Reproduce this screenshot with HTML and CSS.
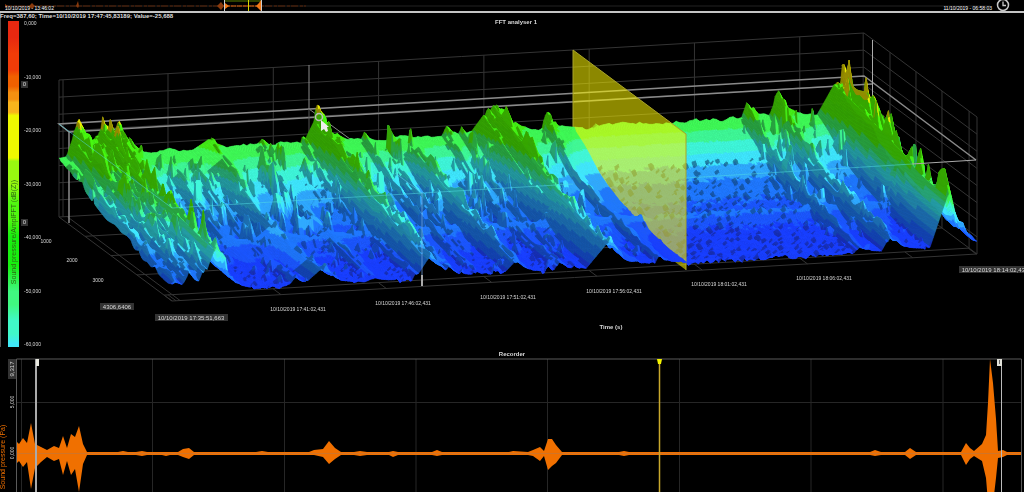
FILE: index.html
```
<!DOCTYPE html>
<html lang="en">
<head>
  <meta charset="UTF-8">
  <meta name="viewport" content="width=device-width, initial-scale=1.0">
  <title>FFT analyser</title>
  <link rel="stylesheet" href="styles.css">
</head>
<body>

  <!-- Overview bar -->
  <header class="overview">
    <svg class="overview-wave" viewBox="0 0 1024 11" preserveAspectRatio="none" aria-hidden="true">
      <line x1="5" y1="6" x2="990" y2="6" stroke="#222"/>
      <line x1="5" y1="6" x2="306" y2="6" stroke="#5a2408" stroke-dasharray="7 2 3 1"/>
      <path d="M5 4l3 2-3 2zM29 6l3-3 3 3-3 3zM76 6l2-5 1 5-1 2zM217 6l4-4 3 4-3 4z" fill="#8a3a0c"/>
      <rect x="225" y="0" width="36" height="2" fill="#2c4000"/>
      <line x1="225" y1="6" x2="261" y2="6" stroke="#d86410" stroke-dasharray="5 1"/>
      <path d="M225 3l4 3-4 3zM256 6l3-3 2-3v11l-2-2z" fill="#f07818"/>
      <rect x="248" y="0" width="1" height="11" fill="#d8d800"/>
      <path d="M224.500 0v11M261.500 0v11" stroke="#ccc"/>
    </svg>
    <div class="overview-labels">
      <time>10/10/2019 - 13:46:02</time>
      <time class="end">11/10/2019 - 06:58:03</time>
      <svg class="clock" viewBox="0 0 14 14" aria-hidden="true">
        <circle cx="7" cy="7" r="5.500" fill="#000" stroke="#c8c8c8" stroke-width="1.500"/>
        <path d="M7 3.500V7.500H10" fill="none" stroke="#c8c8c8" stroke-width="1.300"/>
      </svg>
    </div>
  </header>

  <!-- 3D FFT -->
  <section class="fft">
    <p class="readout">Freq=387,60; Time=10/10/2019 17:47:45,83189; Value=-25,688</p>
    <div class="fft-body">
      <canvas id="surface" width="1024" height="329"></canvas>

      <svg class="labels" viewBox="0 18 1024 329">
        <text x="516" y="24" class="title">FFT analyser 1</text>
        <text x="611" y="329" class="title">Time (s)</text>
        <g class="tick">
          <text x="46" y="243">1000</text>
          <text x="72" y="262">2000</text>
          <text x="98" y="282">3000</text>
          <text x="298" y="311">10/10/2019 17:41:02,431</text>
          <text x="403" y="305">10/10/2019 17:46:02,431</text>
          <text x="508" y="299">10/10/2019 17:51:02,431</text>
          <text x="614" y="293">10/10/2019 17:56:02,431</text>
          <text x="719" y="286">10/10/2019 18:01:02,431</text>
          <text x="824" y="280">10/10/2019 18:06:02,431</text>
        </g>
        <g class="edge">
          <rect x="100" y="303" width="34" height="7"/>
          <text x="117" y="309">4306,6406</text>
          <rect x="155" y="314" width="73" height="7"/>
          <text x="191" y="320">10/10/2019 17:35:51,663</text>
          <rect x="959" y="266" width="73" height="7"/>
          <text x="995" y="272">10/10/2019 18:14:02,431</text>
        </g>
        <!-- cursor -->
        <circle cx="319" cy="117" r="3.500" fill="none" stroke="#bbb" stroke-width="1.500"/>
        <path d="M321 120v11l3-2 2 3 2-1-1-4h2z" fill="#eee"/>
      </svg>

      <div class="scale">
        <div class="scale-bar"><span>Sound pressure/AmplFFT (dB(Z))</span></div>
        <ol class="scale-ticks">
          <li>0,000</li>
          <li>-10,000</li>
          <li>-20,000</li>
          <li>-30,000</li>
          <li>-40,000</li>
          <li>-50,000</li>
          <li>-60,000</li>
        </ol>
        <div class="scale-marks"><span>0</span><span>0</span></div>
      </div>
    </div>
  </section>

  <!-- Recorder -->
  <section class="recorder">
    <h2>Recorder</h2>
    <svg viewBox="0 358 1024 134">
      <path class="grid" d="M21.500 359V492M152.500 359V492M284.500 359V492M416 359V492M547.500 359V492M679.500 359V492M811 359V492M943 359V492M16 402.500H1022"/>
      <path class="frame" d="M16.500 492V359H1021.500V492"/>

      <path id="wave" class="wave"/>
      <path d="M17 453.500H1021" stroke="#d07428"/>

      <!-- selection handles and playback position -->
      <rect x="35" y="359" width="2" height="133" fill="#aaa"/>
      <rect x="36" y="359" width="3" height="7" fill="#e8e8e0"/>
      <path d="M659.500 359V492" stroke="#c8a82c" stroke-width="1.500"/>
      <path d="M657 359h5l-1 5h-3z" fill="#f4f400"/>
      <rect x="1001" y="364" width="1" height="128" fill="#bbb"/>
      <rect x="997" y="359" width="5" height="7" fill="#e0e0d8"/>
      <path d="M999.500 360v4" stroke="#666"/>

      <rect x="8" y="359" width="8" height="20" fill="#333"/>
      <text class="peak" transform="translate(14 369) rotate(-90)">9,317</text>
      <g class="tick">
        <text transform="translate(14 402) rotate(-90)">5,000</text>
        <text transform="translate(14 453) rotate(-90)">0,000</text>
      </g>
      <text class="axis" transform="translate(5 457) rotate(-90)">Sound pressure (Pa)</text>
    </svg>
  </section>

  <script src="surface.js"></script>
  <script src="recorder.js"></script>
</body>
</html>
```
FILE: styles.css
```
/* ========== base ========== */
:root {
  --text: #d8d8d8;
  --line: #c4c4c4;
  --orange: #f07000;
}

* {
  box-sizing: border-box;
}

body {
  margin: 0;
  background: #000;
  color: var(--text);
  font-family: "Liberation Sans", Arial, sans-serif;
  font-size: 6px;
  overflow: hidden;
}

svg,
canvas {
  display: block;
  width: 100%;
}

/* ========== overview ========== */
.overview {
  display: grid;
  grid-template-rows: 11px;
  height: 13px;
  border-bottom: 2px solid var(--line);
}
.overview-wave,
.overview-labels {
  grid-area: 1 / 1;
}
.overview-wave {
  height: 11px;
}
.overview-labels {
  display: flex;
  align-items: flex-end;
  padding: 0 14px 0 5px;
  font-size: 5px;
  line-height: 6px;
  color: #fff;
}
.overview-labels .end {
  margin-left: auto;
  margin-right: 4px;
}
.clock {
  width: 14px;
  height: 14px;
  align-self: flex-start;
  margin-top: -2px;
}

/* ========== fft ========== */
.fft {
  border-left: 1px solid #555;
}
.readout {
  margin: 0 0 -2px -1px;
  font-size: 6px;
  font-weight: bold;
  line-height: 7px;
  color: #ddd;
}
.fft-body {
  display: grid;
  margin-left: -1px;
}
.fft-body > * {
  grid-area: 1 / 1;
}
.labels {
  height: 100%;
}

text {
  fill: var(--text);
  text-anchor: middle;
}
.title {
  font-size: 6px;
  font-weight: bold;
}
.tick text {
  font-size: 5px;
}
.edge rect {
  fill: #333;
}
.edge text,
.peak {
  font-size: 6px;
}

/* colour scale */
.scale {
  display: flex;
  gap: 5px;
  padding: 3px 0 0 8px;
}
.scale-bar {
  display: flex;
  justify-content: center;
  width: 11px;
  padding-bottom: 63px;
  background: linear-gradient(
    #e82810 0 5%, #f03c08 10% 15%, #f06000 17% 20%, #f49010 22% 24%,
    #f8b41c 25% 28%, #eef800 29% 42%, #98f810 43% 50%, #50f810 56% 61%,
    #18f010 66% 75%, #40f880 83% 87%, #40f8c8 92% 96%, #40e8f8 99%
  );
}
.scale-bar span {
  writing-mode: vertical-rl;
  transform: rotate(180deg);
  line-height: 11px;
  font-size: 7px;
  color: #2c6a10;
  margin-top: auto;
}
.scale-ticks {
  display: flex;
  flex-direction: column;
  justify-content: space-between;
  margin: 0;
  padding: 0;
  list-style: none;
  font-size: 5px;
  line-height: 5px;
}
.scale-marks {
  display: flex;
  flex-direction: column;
  gap: 131px;
  margin-left: -25px;
  padding-top: 60px;
}
.scale-marks span {
  width: 7px;
  line-height: 7px;
  background: #333;
  text-align: center;
}

/* ========== recorder ========== */
.recorder h2 {
  margin: 4px 0 0;
  font-size: 6px;
  line-height: 7px;
  text-align: center;
}
.recorder .grid {
  fill: none;
  stroke: #262626;
}
.recorder .frame {
  fill: none;
  stroke: #5a5a5a;
}
.wave {
  fill: var(--orange);
}
.axis {
  font-size: 7px;
  fill: var(--orange);
}
```
FILE: surface.js
```
// Waterfall surface: t = time (left to right), f = frequency (back to front)
const canvas = document.getElementById('surface');
const ctx = canvas.getContext('2d');
ctx.translate(0, -18);

const NT = 480;
const NF = 130;
const PLANE_T = 0.6385;

function project(t, f, h) {
  return [59 + 805 * t + 113 * f, 217 - 47 * t + 84 * f - h];
}

function hash(a, b) {
  const s = Math.sin(a * 127.1 + b * 311.7) * 43758.5453;
  return s - Math.floor(s);
}

// smooth value noise
function noise(x, y) {
  const xi = Math.floor(x), yi = Math.floor(y);
  const u = x - xi, v = y - yi;
  const top = hash(xi, yi) * (1 - u) + hash(xi + 1, yi) * u;
  const bottom = hash(xi, yi + 1) * (1 - u) + hash(xi + 1, yi + 1) * u;
  return top * (1 - v) + bottom * v;
}

// heights at f = 0, 1/n, ... 1
function curve(values, f) {
  const p = f * (values.length - 1);
  const i = Math.min(values.length - 2, Math.floor(p));
  return values[i] + (values[i + 1] - values[i]) * (p - i);
}

const BASE = [57, 53, 48, 42, 35, 30, 26, 23, 20, 18, 16, 14, 20, 13, 11, 10, 9, 8, 8, 8, 8];

// [position, rise width, fall width, heights along f]
const RIDGES = [
  [0.004, 0.010, 0.024, [58, 64, 48, 34, 24]],
  [0.022, 0.014, 0.026, [92, 84, 66, 52, 30]],
  [0.042, 0.014, 0.020, [80, 80, 72, 54, 38]],
  [0.058, 0.024, 0.012, [98, 88, 80, 74, 66]],
  [0.075, 0.020, 0.012, [96, 76, 44, 10, 0]],
  [0.088, 0.012, 0.010, [80, 56, 30, 10, 0]],
  [0.130, 0.014, 0.012, [60, 46, 28, 14, 0]],
  [0.155, 0.010, 0.010, [60, 48, 26, 16, 20]],
  [0.190, 0.028, 0.012, [72, 56, 36, 26, 28]],
  [0.252, 0.012, 0.010, [66, 40, 26, 22, 12]],
  [0.303, 0.004, 0.006, [68, 40, 20, 20, 16]],
  [0.322, 0.020, 0.018, [92, 80, 66, 50, 34]],
  [0.345, 0.010, 0.008, [66, 62, 46, 34, 22]],
  [0.380, 0.008, 0.006, [66, 44, 30, 22, 12]],
  [0.398, 0.010, 0.008, [58, 44, 32, 16, 0]],
  [0.430, 0.018, 0.010, [62, 60, 48, 36, 24]],
  [0.482, 0.008, 0.008, [68, 44, 26, 20, 20]],
  [0.500, 0.006, 0.006, [66, 40, 26, 16, 12]],
  [0.544, 0.030, 0.018, [94, 82, 64, 48, 38]],
  [0.532, 0.024, 0.010, [84, 66, 44, 20, 10]],
  [0.605, 0.006, 0.012, [80, 44, 30, 26, 18]],
  [0.855, 0.008, 0.010, [78, 52, 38, 28, 16]],
  [0.893, 0.012, 0.014, [84, 58, 48, 38, 26]],
  [0.930, 0.014, 0.010, [58, 34, 18, 8, 0]],
  [0.967, 0.026, 0.014, [96, 98, 92, 78, 74]],
  [0.974, 0.006, 0.005, [126, 104, 80, 60, 50]],
  [0.984, 0.008, 0.007, [64, 90, 128, 80, 40, 20, 20, 16, 12, 8, 8]],
  [0.992, 0.016, 0.012, [50, 60, 76, 74, 62, 66, 40, 30, 12, 8, 8]]
];

function height(t, f) {
  const base = curve(BASE, f);
  const bump = noise(t * 240, f * 60);
  const grain = f < 0.2 ? 2.5 : 7;
  let h = base + (bump - 0.5) * grain + (f < 0.01 ? noise(t * 90, 3) * 5 : 0);
  // small random spikes over the mid frequencies
  const spike = noise(t * 150 + 40, f * 30);
  if (spike > 0.72 && (t < 0.6 || t > 0.84) && f > 0.06) {
    h += (spike - 0.72) * (f < 0.6 ? 105 : 40);
  }
  for (const [pos, rise, fall, values] of RIDGES) {
    const d = t - pos;
    if (d < -rise || d > fall * 3) continue;
    const shape = d < 0 ? 1 + d / rise : Math.exp(-d / fall);
    const n = noise(t * 240, f * 28 + pos * 50);
    const rough = d < -0.004 ? 0.92 : 0.66 + 0.54 * n * n + (f < 0.02 ? 0.12 : 0);
    const top = curve(values, f);
    h = Math.max(h, base + (top - base) * shape * rough);
  }
  return Math.max(h, 2);
}

// lit / shaded colours by height
const BANDS = [
  [108, '#e87820', '#a8481c'], [88, '#f0f000', '#938a00'], [74, '#48f810', '#36a400'],
  [62, '#44ee18', '#34a204'], [53, '#40fa58', '#28a040'], [47, '#40fa98', '#26a070'],
  [40, '#40f8dc', '#2498a0'], [33, '#40e8ff', '#2284a8'], [26, '#30aaff', '#1c6cac'],
  [18, '#2078ff', '#1658ac'], [12, '#1c58ff', '#1444b4'], [-99, '#1a40ff', '#1830b8']
];

function colour(h, slope) {
  const band = BANDS.find(b => h >= b[0]);
  return slope > 1.3 ? band[2] : band[1];
}

function stroke(points, style, width) {
  ctx.strokeStyle = style;
  ctx.lineWidth = width || 1;
  ctx.beginPath();
  points.forEach(([x, y], i) => i ? ctx.lineTo(x, y) : ctx.moveTo(x, y));
  ctx.stroke();
}

function drawBox() {
  const grey = '#343434';
  for (let i = 0; i <= 8; i++) {
    const h = i * 137 / 8;
    stroke([project(0, 0, h), project(1, 0, h), project(1, 1, h)], grey);
  }
  for (const t of [0, 0.005, 0.1354, 0.2662, 0.397, 0.5278, 0.6586, 0.7894, 0.9202, 0.999]) {
    stroke([project(t, 0, 0), project(t, 0, 137)], grey);
    stroke([project(t, 0.93, 0), project(t, 1, 0)], grey);
  }
  for (const f of [0.23, 0.46, 0.69, 0.93, 1]) {
    stroke([project(1, f, 0), project(1, f, 137)], grey);
    stroke([project(0, f, 0), project(1, f, 0)], grey);
  }
  stroke([project(0, 0, 0), project(0, 1, 0)], grey);
  stroke([project(0.01, 0, 0), project(0.01, 1, 0)], grey);

  // value cursor
  const bright = '#8a8a8a';
  stroke([[976, 160], [864, 76], [59, 124], [69, 132]], bright, 1.5);
  stroke([[69, 223], [69, 132], [872, 84]], bright, 1.5);
  stroke([[309, 65], [309, 109], [350, 139]], bright);
  stroke([[309, 109], [309, 150]], '#555');
  stroke([[872.5, 40], [872.5, 110]], '#aaa');
}

function drawPlane() {
  ctx.fillStyle = 'rgba(255, 248, 0, 0.55)';
  ctx.beginPath();
  ctx.moveTo(573, 50);
  ctx.lineTo(686, 134);
  ctx.lineTo(686, 270);
  ctx.lineTo(573, 187);
  ctx.fill();
  stroke([[573, 187], [573, 50], [686, 134], [686, 270]], '#a8a428');
}

drawBox();

const grid = [];
for (let i = 0; i <= NT; i++) {
  grid.push([]);
  for (let j = 0; j <= NF; j++) {
    grid[i].push(height(i / NT, j / NF));
  }
}

let planeDone = false;
ctx.lineWidth = 0.6;
for (let i = NT - 1; i >= 0; i--) {
  if (!planeDone && i / NT < PLANE_T) {
    drawPlane();
    ctx.lineWidth = 0.6;
    planeDone = true;
  }
  for (let j = 0; j < NF; j++) {
    const a = grid[i][j], b = grid[i + 1][j], c = grid[i + 1][j + 1], d = grid[i][j + 1];
    const t = i / NT, t2 = (i + 1) / NT, f = j / NF, f2 = (j + 1) / NF;
    ctx.fillStyle = ctx.strokeStyle = colour((a + b + c + d) / 4, (b + c - a - d) / 2);
    ctx.beginPath();
    ctx.moveTo(...project(t, f, a));
    ctx.lineTo(...project(t2, f, b));
    ctx.lineTo(...project(t2, f2, c));
    ctx.lineTo(...project(t, f2, d));
    ctx.closePath();
    ctx.fill();
    ctx.stroke();
  }
}

// cursor lines over the surface
stroke([[59, 124], [172, 208], [573, 184]], 'rgba(80, 220, 230, 0.5)');
stroke([[686, 178], [912, 164]], 'rgba(80, 220, 230, 0.5)');
stroke([[912, 164], [976, 160]], '#aaa');
stroke([[395, 173], [422, 193]], 'rgba(90, 200, 230, 0.6)');
stroke([[422, 193], [422, 275]], 'rgba(120, 170, 230, 0.7)');
stroke([[422, 275], [422, 286]], '#aaa', 2);
```
FILE: recorder.js
```
// envelope samples: x, amplitude above and below the zero line
const ZERO = 453;
const ENVELOPE = [
  [17, 11, 9], [19, 9, 7], [23, 15, 13], [27, 10, 8], [31, 30, 35], [35, 9, 14],
  [41, 6, 8], [47, 3, 3], [54, 7, 7], [59, 5, 5], [63, 17, 21], [67, 5, 7],
  [71, 19, 21], [75, 16, 15], [79, 27, 38], [83, 9, 10], [87, 1, 1],
  [118, 1, 1], [123, 2, 1], [128, 1, 1], [136, 1, 1], [142, 2, 2], [147, 1, 1],
  [162, 1, 1], [166, 1, 2], [170, 1, 1], [178, 1, 1], [183, 4, 3], [189, 5, 5], [194, 1, 1],
  [256, 1, 1], [262, 2, 1], [268, 1, 1], [309, 1, 1], [314, 3, 1], [323, 4, 3],
  [329, 12, 10], [335, 5, 5], [341, 1, 1], [354, 1, 1], [360, 2, 2], [367, 1, 1],
  [389, 1, 1], [393, 2, 3], [398, 1, 1], [432, 1, 1], [437, 3, 2], [442, 1, 1],
  [509, 1, 1], [513, 2, 1], [528, 1, 1], [533, 3, 2], [540, 6, 7], [544, 2, 2],
  [548, 14, 16], [552, 14, 12], [556, 8, 9], [562, 1, 1], [619, 1, 1], [624, 2, 2],
  [629, 1, 1], [870, 1, 1], [875, 3, 2], [881, 1, 1], [905, 1, 1], [910, 5, 5],
  [916, 1, 1], [961, 1, 1], [966, 10, 11], [970, 5, 5], [974, 2, 2], [982, 9, 7],
  [986, 18, 24], [988, 50, 48], [990, 94, 60], [993, 70, 50], [996, 34, 24],
  [998, 2, 4], [1003, 3, 3], [1007, 1, 1], [1021, 1, 1]
];

const upper = ENVELOPE.map(([x, up]) => `${x} ${ZERO - up}`);
const lower = ENVELOPE.map(([x, , down]) => `${x} ${ZERO + 1 + down}`).reverse();
document.getElementById('wave').setAttribute('d', `M${upper.concat(lower).join('L')}z`);
```
